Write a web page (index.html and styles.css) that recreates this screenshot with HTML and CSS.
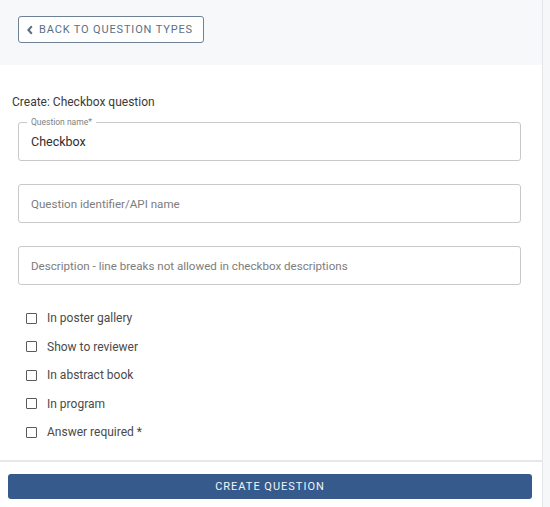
FILE: index.html
```html
<!DOCTYPE html>
<html lang="en">
<head>
  <meta charset="UTF-8">
  <title>Create question</title>
  <link rel="stylesheet" href="styles.css">
</head>
<body>

  <div class="page">
    <div class="main">

      <div class="header">
        <button class="back-btn">
          <svg width="8" height="10" viewBox="0 0 8 10"><path d="M5.8 1.3 L2.4 5 L5.8 8.7" fill="none" stroke="#5b6f84" stroke-width="2"/></svg>
          <span>Back to question types</span>
        </button>
      </div>

      <div class="content">
        <div class="title">Create: Checkbox question</div>

        <div class="field filled">
          <span class="field-label">Question name*</span>
          <span class="field-value">Checkbox</span>
        </div>

        <div class="field">
          <span class="placeholder">Question identifier/API name</span>
        </div>

        <div class="field">
          <span class="placeholder">Description - line breaks not allowed in checkbox descriptions</span>
        </div>

        <div class="checks">
          <label class="check"><span class="box"></span>In poster gallery</label>
          <label class="check"><span class="box"></span>Show to reviewer</label>
          <label class="check"><span class="box"></span>In abstract book</label>
          <label class="check"><span class="box"></span>In program</label>
          <label class="check"><span class="box"></span>Answer required *</label>
        </div>
      </div>

      <div class="footer">
        <button class="create-btn">Create question</button>
      </div>

    </div>
    <div class="side"></div>
  </div>

</body>
</html>
```

FILE: styles.css
```css
body {
  margin: 0;
  font-family: Roboto, "Liberation Sans", sans-serif;
  color: #333;
  background: #fff;
}

.page {
  display: flex;
  height: 507px;
}

.main {
  width: 542px;
  border-right: 1px solid #e4e6ea;
  display: flex;
  flex-direction: column;
}

.side {
  flex: 1;
  background: #f6f7f9;
}

.header {
  height: 65px;
  box-sizing: border-box;
  padding: 16px 18px 0;
  background: #f7f8fa;
}

.back-btn {
  display: flex;
  align-items: center;
  gap: 5px;
  height: 27px;
  width: 186px;
  padding: 0 0 0 7px;
  box-sizing: border-box;
  background: #fff;
  border: 1px solid #6f8194;
  border-radius: 3px;
  color: #5b6f84;
  font-family: Roboto, "Liberation Sans", sans-serif;
  font-size: 11px;
  letter-spacing: 0.85px;
  text-transform: uppercase;
  cursor: pointer;
}

.content {
  padding: 30px 0 0 18px;
}

.title {
  margin-left: -6px;
  font-size: 12px;
  line-height: 14px;
  color: #3a3a3a;
  margin-bottom: 13px;
}

.field {
  position: relative;
  width: 503px;
  height: 39px;
  box-sizing: border-box;
  border: 1px solid #c9c9c9;
  border-radius: 3px;
  display: flex;
  align-items: center;
  padding-left: 12px;
  margin-bottom: 23px;
}

.field-label {
  position: absolute;
  top: -6px;
  left: 8px;
  padding: 0 4px;
  background: #fff;
  font-size: 8.5px;
  line-height: 10px;
  color: #808080;
}

.field-value {
  font-size: 12.5px;
  color: #2e2e2e;
}

.placeholder {
  font-size: 11.6px;
  color: #7d7d7d;
}

.checks {
  margin-top: -4px;
  padding-left: 8px;
}

.check {
  display: flex;
  align-items: center;
  height: 28.5px;
  font-size: 12px;
  color: #4a4a4a;
}

.box {
  width: 9px;
  height: 9px;
  border: 1.5px solid #5a5a5a;
  border-radius: 1px;
  margin-right: 10px;
}

.footer {
  margin-top: auto;
  border-top: 2px solid #e6e7ea;
  padding: 12px 10px 8px 8px;
}

.create-btn {
  display: block;
  width: 100%;
  height: 25px;
  border: none;
  border-radius: 3px;
  background: #355a8b;
  color: #f2f5f9;
  font-family: Roboto, "Liberation Sans", sans-serif;
  font-size: 11px;
  letter-spacing: 1px;
  text-transform: uppercase;
  cursor: pointer;
}
```
